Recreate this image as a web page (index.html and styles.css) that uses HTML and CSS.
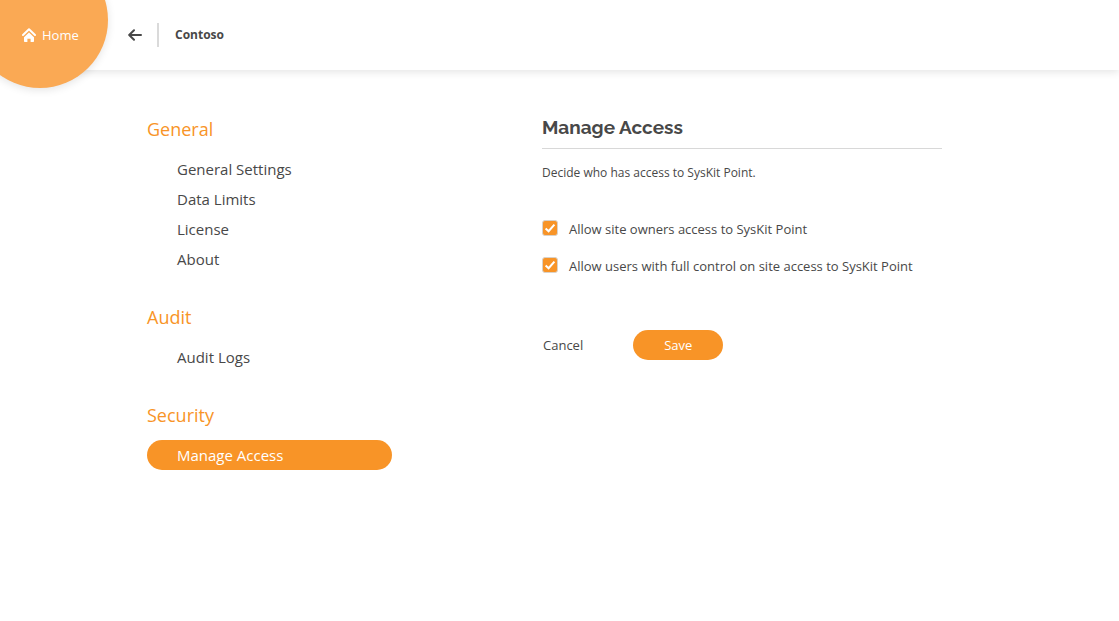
FILE: index.html
```html
<!DOCTYPE html>
<html lang="en">
<head>
<meta charset="utf-8">
<meta name="viewport" content="width=device-width, initial-scale=1">
<title>Manage Access</title>
<link rel="stylesheet" href="styles.css">
</head>
<body>
<header class="topbar">
  <a class="home" href="#">
    <svg class="home-icon" viewBox="0 0 14 14" aria-hidden="true">
      <path d="M1 7 7 1.2l6 5.8" fill="none" stroke="currentColor" stroke-width="2" stroke-linecap="round" stroke-linejoin="round"/>
      <path d="M2 9.2 7 4.6l5 4.6v4q0 .8-.8.8H8.6v-3.2H5.4V14H2.8q-.8 0-.8-.8z" fill="currentColor"/>
    </svg>
    <span>Home</span>
  </a>
  <button class="back" type="button" aria-label="Back">
    <svg class="back-icon" viewBox="0 0 14 12" aria-hidden="true">
      <path d="M13 6H1.5M6 1.2 1.2 6 6 10.8" fill="none" stroke="currentColor" stroke-width="2" stroke-linecap="round" stroke-linejoin="round"/>
    </svg>
  </button>
  <span class="tenant">Contoso</span>
</header>
<div class="page">
  <nav class="menu" aria-label="Settings">
    <section>
      <h2 class="menu-title">General</h2>
      <ul class="menu-list">
        <li><a class="menu-link" href="#">General Settings</a></li>
        <li><a class="menu-link" href="#">Data Limits</a></li>
        <li><a class="menu-link" href="#">License</a></li>
        <li><a class="menu-link" href="#">About</a></li>
      </ul>
    </section>
    <section>
      <h2 class="menu-title">Audit</h2>
      <ul class="menu-list">
        <li><a class="menu-link" href="#">Audit Logs</a></li>
      </ul>
    </section>
    <section>
      <h2 class="menu-title">Security</h2>
      <ul class="menu-list">
        <li><a class="menu-link active" href="#" aria-current="page">Manage Access</a></li>
      </ul>
    </section>
  </nav>
  <main class="content">
    <h1 class="title">Manage Access</h1>
    <p class="lead">Decide who has access to SysKit Point.</p>
    <form>
      <div class="options">
        <label class="option">
          <span class="check">
            <input class="check-input" type="checkbox" checked>
            <svg class="check-mark" viewBox="0 0 16 16" aria-hidden="true"><path d="M3.6 8.4 6.6 11.2 12.4 4.6" /></svg>
          </span>
          <span>Allow site owners access to SysKit Point</span>
        </label>
        <label class="option">
          <span class="check">
            <input class="check-input" type="checkbox" checked>
            <svg class="check-mark" viewBox="0 0 16 16" aria-hidden="true"><path d="M3.6 8.4 6.6 11.2 12.4 4.6" /></svg>
          </span>
          <span>Allow users with full control on site access to SysKit Point</span>
        </label>
      </div>
      <div class="actions">
        <button class="button cancel" type="button">Cancel</button>
        <button class="button save" type="submit">Save</button>
      </div>
    </form>
  </main>
</div>
</body>
</html>
```
FILE: styles.css
```css
* {
  box-sizing: border-box;
}

body {
  margin: 0;
  background: #fff;
  color: #484848;
  font-family: "Open Sans", "Noto Sans", sans-serif;
  font-size: 13px;
  line-height: 20px;
}

a {
  color: inherit;
  text-decoration: none;
}

button {
  font: inherit;
  color: inherit;
  border: 0;
  background: none;
  padding: 0;
  cursor: pointer;
}

.topbar {
  position: relative;
  display: flex;
  align-items: center;
  height: 70px;
  padding-left: 128px;
  box-shadow: 0 2px 8px rgba(0, 0, 0, 0.11);
}

/* Round corner badge that hangs below the bar */
.home {
  position: absolute;
  top: -48px;
  left: -28px;
  width: 136px;
  height: 136px;
  padding: 73px 0 0 50px;
  display: flex;
  align-items: flex-start;
  gap: 6px;
  border-radius: 50%;
  background: #faa954;
  box-shadow: 0 2px 8px rgba(0, 0, 0, 0.11);
  color: #fff;
}

.home-icon {
  width: 14px;
  height: 14px;
  margin-top: 3px;
}

.back {
  display: flex;
  align-items: center;
  height: 24px;
  padding-right: 15px;
  border-right: 2px solid #dadada;
}

.back-icon {
  width: 14px;
  height: 12px;
}

.tenant {
  margin-left: 16px;
  font-size: 12px;
  font-weight: 700;
}

.page {
  display: flex;
  gap: 150px;
  padding: 44px 24px 44px 147px;
}

.menu {
  flex: 0 1 245px;
  display: flex;
  flex-direction: column;
  gap: 28px;
}

.menu-title {
  margin: 0 0 10px;
  color: #f89427;
  font-size: 18px;
  font-weight: 400;
  line-height: 30px;
}

.menu-list {
  margin: 0;
  padding: 0;
  list-style: none;
}

.menu-link {
  display: block;
  padding-left: 30px;
  border-radius: 15px;
  font-size: 15px;
  line-height: 30px;
}

.menu-link.active {
  background: #f89427;
  color: #fff;
}

.content {
  flex: 0 1 400px;
}

.title {
  margin: 0 0 14px;
  padding-bottom: 7px;
  border-bottom: 1px solid #d8d8d8;
  font-family: Raleway, Lato, sans-serif;
  font-size: 19px;
  font-weight: 700;
  line-height: 27px;
}

.lead {
  margin: 0 0 36px;
  font-size: 12px;
}

.options {
  display: flex;
  flex-direction: column;
  gap: 17px;
}

.option {
  display: flex;
  align-items: flex-start;
  gap: 11px;
}

.check {
  display: grid;
  flex: none;
  width: 16px;
  height: 16px;
  margin-top: 1px;
}

.check-input,
.check-mark {
  grid-area: 1 / 1;
  width: 16px;
  height: 16px;
  margin: 0;
}

.check-input {
  appearance: none;
  border: 1px solid #d9d2ca;
  border-radius: 3px;
}

.check-input:checked {
  background: #f89427;
}

.check-mark {
  fill: none;
  stroke: #fff;
  stroke-width: 2;
  pointer-events: none;
}

.check-input:not(:checked) + .check-mark {
  visibility: hidden;
}

.actions {
  display: flex;
  align-items: center;
  gap: 50px;
  margin-top: 54px;
  padding-left: 1px;
}

.button {
  height: 30px;
}

.save {
  width: 90px;
  border-radius: 15px;
  background: #f89427;
  color: #fff;
}
```
